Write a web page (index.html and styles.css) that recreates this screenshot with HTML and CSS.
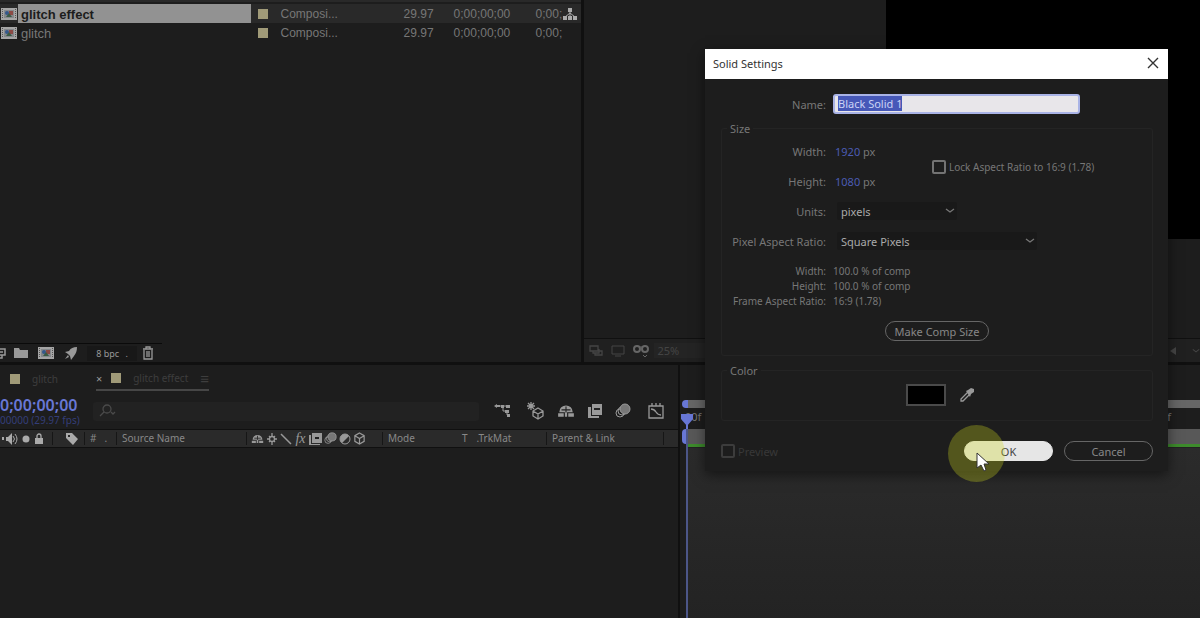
FILE: index.html
```
<!DOCTYPE html>
<html lang="en">
<head>
    <meta charset="UTF-8">
    <meta name="viewport" content="width=device-width, initial-scale=1.0">
    <title>Solid Settings</title>
    <link rel="stylesheet" href="styles.css">
</head>
<body>
    <!-- Icons used more than once -->
    <svg class="defs" aria-hidden="true">
        <symbol id="comp" viewBox="0 0 18 14">
            <rect x="1" y="1" width="16" height="12" fill="#a5a5a5"/>
            <path d="M2.5 2v10M15.5 2v10" stroke="#555" stroke-width="1" stroke-dasharray="1 1"/>
            <rect x="4" y="3" width="10" height="8" fill="#85888c"/>
            <circle cx="7" cy="6" r="2" fill="#35588c"/>
            <rect x="9" y="4" width="4" height="4" fill="#8c4a45"/>
            <path d="M6 10l3-4 3 4z" fill="#3a5a45"/>
        </symbol>
        <symbol id="shy" viewBox="0 0 16 14">
            <path d="M2 8a6 6 0 0 1 12 0z"/>
            <path d="M1 9h5v3H1zM10 9h5v3h-5zM7 8h2v4H7z"/>
            <path d="M8 3v5M4 6h8" stroke="#222" stroke-width="1"/>
        </symbol>
        <symbol id="frames" viewBox="0 0 16 16">
            <path d="M5 1h10v11H5z"/>
            <path d="M1 4h3v9h8v2H1z"/>
            <path d="M7 6h6" stroke="#222" stroke-width="2"/>
        </symbol>
        <symbol id="blur" viewBox="0 0 16 16">
            <circle cx="5" cy="10" r="4" fill="none" stroke="currentColor"/>
            <circle cx="7" cy="8" r="4" fill="none" stroke="currentColor"/>
            <circle cx="10" cy="6" r="5" fill="#777" stroke="currentColor"/>
        </symbol>
        <symbol id="cube" viewBox="0 0 14 14">
            <path d="M7 1l5 3v6l-5 3-5-3V4zM2 4l5 3 5-3M7 7v6" fill="none" stroke="currentColor" stroke-width="1.3"/>
        </symbol>
        <symbol id="chevron" viewBox="0 0 10 6">
            <path d="M1 1l4 3 4-3" fill="none" stroke="currentColor" stroke-width="1.3"/>
        </symbol>
    </svg>

    <div class="app">
        <section class="project">
            <table class="items">
                <tr class="selected">
                    <td class="thumb"><svg width="18" height="14"><use href="#comp"/></svg></td>
                    <td class="item-name">glitch effect</td>
                    <td class="label"><span class="swatch"></span></td>
                    <td class="type">Composi...</td>
                    <td class="rate">29.97</td>
                    <td class="time">0;00;00;00</td>
                    <td class="end">0;00;</td>
                    <td class="flow">
                        <svg width="14" height="14" viewBox="0 0 14 14" fill="currentColor">
                            <path d="M5 1h4v4H5zM0 9h4v4H0zM5 9h4v4H5zM10 9h4v4h-4z"/>
                            <path d="M7 4v6M2 10l5-4 5 4" fill="none" stroke="currentColor"/>
                        </svg>
                    </td>
                </tr>
                <tr>
                    <td class="thumb"><svg width="18" height="14"><use href="#comp"/></svg></td>
                    <td class="item-name">glitch</td>
                    <td class="label"><span class="swatch"></span></td>
                    <td class="type">Composi...</td>
                    <td class="rate">29.97</td>
                    <td class="time">0;00;00;00</td>
                    <td class="end">0;00;</td>
                    <td class="flow"></td>
                </tr>
            </table>
            <div class="project-tools">
                <button aria-label="Interpret footage"><svg width="6" height="14" viewBox="0 0 6 14"><path d="M0 3h5v6H0M0 6h3M2 9v3H0" fill="none" stroke="currentColor" stroke-width="1.5"/></svg></button>
                <button aria-label="New folder"><svg width="14" height="12" viewBox="0 0 14 12" fill="currentColor"><path d="M0 1h5l1 2h8v8H0z"/></svg></button>
                <button aria-label="New composition"><svg width="18" height="14"><use href="#comp"/></svg></button>
                <button aria-label="Project settings"><svg width="14" height="14" viewBox="0 0 14 14" fill="currentColor"><path d="M13 1c-4 0-6 1-8 4L1 6l3 2 2 2 1 4 3-4c2-3 3-5 3-9zM4 9l-3 4 4-2z"/></svg></button>
                <button class="depth">8 bpc <span>.</span></button>
                <button aria-label="Delete"><svg width="12" height="14" viewBox="0 0 12 14" fill="none" stroke="currentColor" stroke-width="1.3"><path d="M1 3h10M4 3V1h4v2M2 4v9h8V4M5 5v6M7 5v6"/></svg></button>
            </div>
        </section>

        <section class="viewer">
            <div class="canvas"></div>
            <div class="viewer-tools">
                <svg width="14" height="12" viewBox="0 0 14 12" fill="none" stroke="currentColor" stroke-width="1.3"><path d="M1 1h8v5H1zM4 6v2h6V4M6 8v2h7V6h-3"/></svg>
                <svg width="14" height="12" viewBox="0 0 14 12" fill="none" stroke="currentColor"><path d="M1 1h12v8H1zM4 11h6"/></svg>
                <svg class="bright" width="16" height="14" viewBox="0 0 16 14" fill="none" stroke="currentColor" stroke-width="2"><circle cx="4" cy="5" r="3"/><circle cx="12" cy="5" r="3"/><path d="M6 3h4M10 11l2 2 2-2" stroke-width="1"/></svg>
                <span class="zoom">25%</span>
                <svg class="last" width="10" height="10" viewBox="0 0 10 10" fill="currentColor"><path d="M8 1v8L2 5z"/></svg>
                <svg width="8" height="6" viewBox="0 0 10 6"><use href="#chevron"/></svg>
            </div>
        </section>

        <section class="timeline">
            <div class="layers">
                <nav class="tabs">
                    <a class="tab" href="#"><span class="swatch"></span>glitch</a>
                    <a class="tab active" href="#"><b>×</b><span class="swatch"></span>glitch effect<i>≡</i></a>
                </nav>
                <div class="controls">
                    <div class="clock">
                        <strong>0;00;00;00</strong>
                        <small>00000 (29.97 fps)</small>
                    </div>
                    <label class="search">
                        <svg width="18" height="14" viewBox="0 0 18 14" fill="none" stroke="currentColor" stroke-width="1.3"><circle cx="8" cy="5" r="4"/><path d="M5 8l-4 4M12 8l2 2 2-2"/></svg>
                        <input type="text" aria-label="Search layers">
                    </label>
                    <div class="switches">
                        <button aria-label="Mini-flowchart"><svg width="18" height="16" viewBox="0 0 18 16" fill="currentColor"><path d="M1 3l3-2v1h3v2H4v1zM8 2h3v3H8zM13 2h4v3h-4zM12 7h4v3h-4zM14 11h3v3h-3z"/><path d="M6 3h8M10 4v4h4M14 9v3" fill="none" stroke="currentColor"/></svg></button>
                        <button aria-label="Draft 3D"><svg width="18" height="18" viewBox="0 0 18 18" fill="none" stroke="currentColor" stroke-width="1.3"><path d="M11 6l5 3v5l-5 3-5-3V9zM6 9l5 3 5-3M11 12v5M4 0v8M0 4h8M1 1l6 6M7 1L1 7"/></svg></button>
                        <button aria-label="Hide shy layers"><svg width="18" height="16" viewBox="0 0 16 14" fill="currentColor"><use href="#shy"/></svg></button>
                        <button aria-label="Frame blending"><svg width="16" height="16" fill="currentColor"><use href="#frames"/></svg></button>
                        <button aria-label="Motion blur"><svg width="16" height="16"><use href="#blur"/></svg></button>
                        <button aria-label="Graph editor"><svg width="18" height="16" viewBox="0 0 18 16" fill="none" stroke="currentColor" stroke-width="1.3"><path d="M2 3h14v12H2zM5 0v3M9 0v3M13 0v3M4 6c6 0 4 6 10 6"/></svg></button>
                    </div>
                </div>
                <div class="columns">
                    <span class="col av">
                        <svg width="16" height="14" viewBox="0 0 16 14" fill="currentColor"><path d="M0 5h2v3H0zM4 5h2l4-4v12L6 9H4z"/><path d="M11 4q3 3 0 6M13 2q4 5 0 10" fill="none" stroke="currentColor"/></svg>
                        <svg width="8" height="8" viewBox="0 0 8 8" fill="currentColor"><circle cx="4" cy="4" r="3.5"/></svg>
                        <svg width="10" height="12" viewBox="0 0 10 12" fill="currentColor"><path d="M1 5h8v6H1z"/><path d="M3 5V3a2 2 0 0 1 4 0v2" fill="none" stroke="currentColor" stroke-width="1.3"/></svg>
                    </span>
                    <span class="col tag"><svg width="14" height="14" viewBox="0 0 14 14" fill="currentColor"><path fill-rule="evenodd" d="M1 1h6l6 6-5 6-7-7zM3 3v2h2V3z"/></svg></span>
                    <span class="col number"><em>#</em><em>.</em></span>
                    <span class="col source">Source Name</span>
                    <span class="col icons">
                        <svg width="13" height="12" viewBox="0 0 16 14" fill="currentColor"><use href="#shy"/></svg>
                        <svg width="12" height="12" viewBox="0 0 12 12" fill="none" stroke="currentColor" stroke-width="1.3"><circle cx="6" cy="6" r="2.5"/><path d="M6 0v3M6 9v3M1 6h2M9 6h2M3 3l1 1M8 8l1 1M9 3L8 4M4 8L3 9"/></svg>
                        <svg width="12" height="12" viewBox="0 0 12 12" stroke="currentColor" stroke-width="1.5"><path d="M1 1l10 10"/></svg>
                        <em class="fx">fx</em>
                        <svg width="13" height="13" viewBox="0 0 13 13" fill="currentColor"><path d="M3 1h10v10H3zM0 3h2v9h9v1H0z"/><path d="M6 6h4" stroke="#222" stroke-width="2"/></svg>
                        <svg width="13" height="13" viewBox="0 0 16 16"><use href="#blur"/></svg>
                        <svg width="12" height="12" viewBox="0 0 12 12"><circle cx="6" cy="6" r="5" fill="currentColor"/><path d="M10 3a5 5 0 0 1-7 7z" fill="#2b2b2b"/><circle cx="6" cy="6" r="5" fill="none" stroke="currentColor"/></svg>
                        <svg width="13" height="13"><use href="#cube"/></svg>
                    </span>
                    <span class="col mode">Mode</span>
                    <span class="col matte"><em>T</em>.TrkMat</span>
                    <span class="col parent">Parent &amp; Link</span>
                </div>
            </div>
            <div class="track">
                <div class="navigator"></div>
                <div class="ruler"><span>:00f</span><span>f</span></div>
                <div class="work-area"></div>
                <div class="cache"></div>
                <div class="lanes"></div>
                <svg class="playhead" width="14" height="18" viewBox="0 0 14 18" fill="currentColor"><path d="M1 2h12v5l-6 7-6-7z"/><path d="M6 13h2v5H6z"/></svg>
                <div class="playline"></div>
            </div>
        </section>
    </div>

    <form class="dialog" role="dialog" aria-labelledby="dialog-title">
        <header class="titlebar">
            <h1 id="dialog-title">Solid Settings</h1>
            <button type="button" aria-label="Close"><svg width="12" height="12" viewBox="0 0 12 12" stroke="currentColor" stroke-width="1.4"><path d="M1 1l10 10M11 1L1 11"/></svg></button>
        </header>
        <div class="dialog-body">
            <div class="name-row">
                <label for="name">Name:</label>
                <input id="name" type="text" value="Black Solid 1" spellcheck="false">
            </div>

            <fieldset class="size">
                <legend>Size</legend>
                <div class="settings">
                    <label for="width">Width:</label>
                    <span class="value"><input id="width" type="text" value="1920">px</span>
                    <label class="lock"><input type="checkbox">Lock Aspect Ratio to 16:9 (1.78)</label>
                    <label for="height">Height:</label>
                    <span class="value"><input id="height" type="text" value="1080">px</span>
                    <label for="units">Units:</label>
                    <span class="select units">
                        <select id="units"><option>pixels</option></select>
                        <svg width="10" height="6"><use href="#chevron"/></svg>
                    </span>
                    <label for="ratio">Pixel Aspect Ratio:</label>
                    <span class="select ratio">
                        <select id="ratio"><option>Square Pixels</option></select>
                        <svg width="10" height="6"><use href="#chevron"/></svg>
                    </span>
                </div>
                <dl class="summary">
                    <dt>Width:</dt><dd>100.0 % of comp</dd>
                    <dt>Height:</dt><dd>100.0 % of comp</dd>
                    <dt>Frame Aspect Ratio:</dt><dd>16:9 (1.78)</dd>
                </dl>
                <button class="pill comp-size" type="button">Make Comp Size</button>
            </fieldset>

            <fieldset class="color">
                <legend>Color</legend>
                <div class="picker">
                    <button class="color-swatch" type="button" aria-label="Solid color"></button>
                    <button class="dropper" type="button" aria-label="Eyedropper"><svg width="16" height="16" viewBox="0 0 16 16"><path d="M9 5L2 12v2h2l7-7" fill="none" stroke="currentColor" stroke-width="1.3"/><path d="M7 4l2-1 3-2 3 1v3l-3 2-1 3z" fill="currentColor"/></svg></button>
                </div>
            </fieldset>

            <footer class="actions">
                <label class="preview"><input type="checkbox" disabled>Preview</label>
                <button class="pill primary" type="button">OK</button>
                <button class="pill" type="button">Cancel</button>
            </footer>
        </div>
        <span class="click-halo"></span>
        <svg class="cursor" width="14" height="20" viewBox="0 0 14 20"><path d="M1 1v15l4-3 3 6 2-1-2-6h5z" fill="#fff" stroke="#333"/></svg>
    </form>

    <script>
        const nameField = document.getElementById('name');
        nameField.focus();
        nameField.select();
    </script>
</body>
</html>
```
FILE: styles.css
```
:root {
    --panel: #1d1d1d;
    --edge: #101010;
    --text: #777;
    --icon: #999;
    --blue: #4b5cb4;
    --sand: #a09a78;
}

* {
    margin: 0;
    padding: 0;
    box-sizing: border-box;
}

body {
    font-family: "Noto Sans", sans-serif;
    font-size: 11px;
    line-height: 15px;
    color: var(--text);
    background: var(--edge);
    overflow: hidden;
}

button,
input,
select {
    font: inherit;
    color: inherit;
    background: none;
    border: none;
    outline: none;
}

svg {
    display: block;
    flex: none;
}

em {
    font-style: normal;
}

.defs {
    position: absolute;
    width: 0;
    height: 0;
}

.swatch {
    display: block;
    width: 10px;
    height: 10px;
    background: var(--sand);
}

.app {
    display: grid;
    grid-template-columns: 97fr 103fr;
    grid-template-rows: 362fr 253fr;
    gap: 3px;
    height: 100vh;
}

/* Project panel */
.project {
    display: flex;
    flex-direction: column;
    justify-content: space-between;
    min-width: 0;
    border-top: 2px solid #292929;
    padding-top: 2px;
    background: var(--panel);
    overflow: hidden;
}

.items {
    width: 100%;
    table-layout: fixed;
    border-collapse: collapse;
    font-family: "Liberation Sans", Arial, sans-serif;
    font-size: 12px;
    white-space: nowrap;
}

.items td {
    height: 19px;
    padding-top: 2px;
    vertical-align: middle;
}

.items .thumb,
.items .label,
.items .flow {
    padding-top: 0;
}

.items .selected {
    background: #292929;
}

.items .selected .item-name {
    color: #1c1c1c;
    font-weight: bold;
    background: #929292;
}

.thumb { width: 18px; }
.item-name { padding-left: 3px; font-size: 13px; }
.label { width: 30px; padding-left: 7px; }
.type { width: 123px; }
.rate { width: 50px; }
.time { width: 82px; }
.end { width: 27px; }
.flow { width: 18px; color: #aaa; }

.project-tools {
    display: flex;
    align-items: center;
    gap: 9px;
    width: 162px;
    height: 19px;
    border-top: 1px solid #0a0a0a;
    color: var(--icon);
}

.project-tools button:first-child {
    margin-right: -1px;
}

.depth {
    width: 50px;
    height: 15px;
    margin-right: -4px;
    font-size: 9px;
    background: #181818;
}

.depth span {
    margin-left: 4px;
}

/* Viewer panel */
.viewer {
    display: flex;
    flex-direction: column;
    justify-content: space-between;
    background: var(--panel);
}

.canvas {
    align-self: flex-end;
    width: 51%;
    height: 66%;
    background: #000;
}

.viewer-tools {
    display: flex;
    align-items: center;
    gap: 8px;
    height: 24px;
    padding: 0 0 0 5px;
    border-top: 1px solid var(--edge);
    background: #202020;
    color: #444;
}

.bright {
    color: #666;
}

.zoom {
    width: 60px;
    margin-left: -3px;
    padding-left: 4px;
    background: #242424;
}

.last {
    margin-left: auto;
    margin-right: 6px;
}

/* Timeline */
.timeline {
    grid-column: 1 / -1;
    display: grid;
    grid-template-columns: 17fr 13fr;
    min-height: 0;
}

.layers {
    display: flex;
    flex-direction: column;
    min-width: 0;
    background: var(--panel);
    border-right: 2px solid var(--edge);
    overflow: hidden;
}

.tabs {
    display: flex;
    gap: 38px;
    height: 28px;
    padding-left: 10px;
}

.tab {
    display: flex;
    align-items: center;
    gap: 12px;
    height: 26px;
    padding-top: 2px;
    color: #3e3e3e;
    font-size: 10px;
    text-decoration: none;
}

.tab.active {
    border-bottom: 2px solid #464646;
}

.tab b {
    margin-right: -3px;
    color: #999;
    font-size: 11px;
    font-weight: normal;
}

.tab i {
    font-size: 15px;
    font-style: normal;
}

.controls {
    display: flex;
    align-items: center;
    height: 36px;
}

.clock {
    width: 93px;
    white-space: nowrap;
}

.clock strong {
    display: block;
    font-size: 16px;
    line-height: 18px;
    font-weight: 600;
    color: #6877d5;
}

.clock small {
    display: block;
    font-size: 10px;
    line-height: 12px;
    color: #343d78;
}

.search {
    display: flex;
    flex: 1;
    align-items: center;
    max-width: 386px;
    height: 19px;
    padding-left: 6px;
    border-radius: 3px;
    background: #222;
    color: #4a4a4a;
}

.search input {
    flex: 1;
    min-width: 0;
}

.switches {
    display: flex;
    align-items: center;
    gap: 12px;
    margin-left: 14px;
    color: var(--icon);
}

.switches button:first-child,
.switches button:nth-last-child(2) {
    margin-right: 4px;
}

.columns {
    display: flex;
    align-items: center;
    height: 19px;
    border: solid var(--edge);
    border-width: 1px 0;
    background: #2a2a2a;
    color: #888;
    font-size: 10px;
    white-space: nowrap;
}

.col {
    display: flex;
    align-items: center;
    height: 13px;
    border-right: 1px solid #161616;
}

.av { gap: 4px; width: 53px; padding-left: 2px; color: #aaa; }
.tag { width: 32px; padding-left: 12px; color: #aaa; }
.number { gap: 8px; width: 32px; padding-left: 5px; }
.source { width: 130px; padding-left: 5px; }
.icons { gap: 2px; width: 136px; padding-left: 4px; color: #999; }
.mode { width: 75px; padding-left: 5px; border: none; }
.matte { gap: 9px; width: 89px; padding-left: 4px; }
.parent { width: 117px; padding-left: 5px; }

.fx {
    width: 13px;
    font: italic 14px "Liberation Serif", serif;
    text-align: center;
}

.track {
    position: relative;
    display: flex;
    flex-direction: column;
    padding: 35px 0 0 2px;
    background: var(--panel);
}

.navigator {
    height: 8px;
    border-left: 6px solid #6877d5;
    border-radius: 5px 0 0 5px;
    background: #666;
}

.ruler {
    display: flex;
    justify-content: space-between;
    height: 21px;
    padding: 1px 29px 0 0;
    font-size: 11px;
}

.work-area {
    height: 15px;
    border-left: 5px solid #6877d5;
    border-radius: 4px 0 0 4px;
    background: #585858;
}

.cache {
    height: 3px;
    margin-left: 5px;
    background: #3d8b2c;
}

.lanes {
    flex: 1;
    border-top: 1px solid #222;
    margin-left: 5px;
    background: linear-gradient(#2b2b2b, #232323);
}

.playhead {
    position: absolute;
    top: 47px;
    left: 0;
    color: #6877d5;
}

.playline {
    position: absolute;
    top: 64px;
    bottom: 0;
    left: 6px;
    width: 2px;
    background: #4c5688;
}

/* Solid settings dialog */
.dialog {
    position: absolute;
    top: 49px;
    right: 32px;
    width: 463px;
    background: var(--panel);
    box-shadow: 0 4px 12px rgba(0, 0, 0, 0.5);
}

.titlebar {
    display: flex;
    align-items: center;
    justify-content: space-between;
    height: 30px;
    padding: 0 9px 2px 8px;
    background: #fff;
    color: #333;
}

.titlebar h1 {
    font-size: 11px;
    font-weight: normal;
}

.dialog-body {
    padding: 15px 15px 10px 16px;
}

.name-row,
.summary {
    display: grid;
    grid-template-columns: 105px 1fr;
    column-gap: 7px;
    align-items: center;
}

.name-row label,
.settings > label:not(.lock),
.summary dt {
    text-align: right;
    white-space: nowrap;
}

#name {
    width: 247px;
    height: 20px;
    padding: 0 3px 1px;
    border: 2px solid #a9b3e6;
    border-radius: 3px;
    background: #e8e6ea;
    color: #222;
}

#name::selection {
    background: #4658b8;
    color: #ccd4f5;
}

fieldset {
    border: 1px solid #242424;
    border-radius: 3px;
}

legend {
    margin-left: 5px;
    padding: 0 3px;
}

.size {
    height: 235px;
    margin-top: 7px;
}

.settings {
    display: grid;
    grid-template-columns: 104px 91px 1fr;
    grid-auto-rows: 30px;
    column-gap: 7px;
    align-items: center;
}

.value {
    padding-left: 2px;
}

.value input {
    width: 28px;
    color: var(--blue);
}

.lock,
.preview {
    display: flex;
    align-items: center;
    gap: 3px;
    white-space: nowrap;
}

.lock {
    grid-column: 3;
    grid-row: 1 / 3;
    padding: 2px 0 0 1px;
    font-size: 10px;
}

input[type="checkbox"] {
    appearance: none;
    width: 14px;
    height: 14px;
    border: 2px solid #737373;
    border-radius: 2px;
}

.select {
    grid-column: 2 / 4;
    display: flex;
    align-items: center;
    height: 18px;
    margin-left: 4px;
    border-radius: 2px;
    background: #191919;
}

.select select {
    flex: 1;
    height: 18px;
    padding-left: 4px;
    appearance: none;
    color: #aaa;
}

.select svg {
    margin-right: 2px;
}

.units { width: 120px; }
.ratio { width: 200px; }

.summary {
    grid-template-columns: 104px 1fr;
    margin-top: 8px;
    font-size: 10px;
}

.pill {
    width: 89px;
    height: 20px;
    border: 1px solid #666;
    border-radius: 10px;
    color: #888;
}

.comp-size {
    display: block;
    width: 104px;
    margin: 12px auto 0;
}

.color {
    height: 58px;
    margin-top: 7px;
}

.picker {
    display: flex;
    align-items: center;
    justify-content: center;
    gap: 13px;
    padding: 6px 0 0 6px;
}

.color-swatch {
    width: 40px;
    height: 22px;
    border: 2px solid #4a4a4a;
    background: #000;
}

.dropper {
    color: #999;
}

.actions {
    display: flex;
    align-items: center;
    gap: 11px;
    margin-top: 20px;
}

.preview {
    margin-right: auto;
    color: #383838;
}

.preview input[type="checkbox"] {
    border-color: #3c3c3c;
}

.primary {
    border-color: #e6e6e6;
    background: #e6e6e6;
    color: #444;
}

.click-halo {
    position: absolute;
    bottom: -11px;
    left: 243px;
    width: 57px;
    height: 57px;
    border-radius: 50%;
    background: rgba(210, 220, 30, 0.3);
}

.cursor {
    position: absolute;
    bottom: -1px;
    left: 271px;
}
```
